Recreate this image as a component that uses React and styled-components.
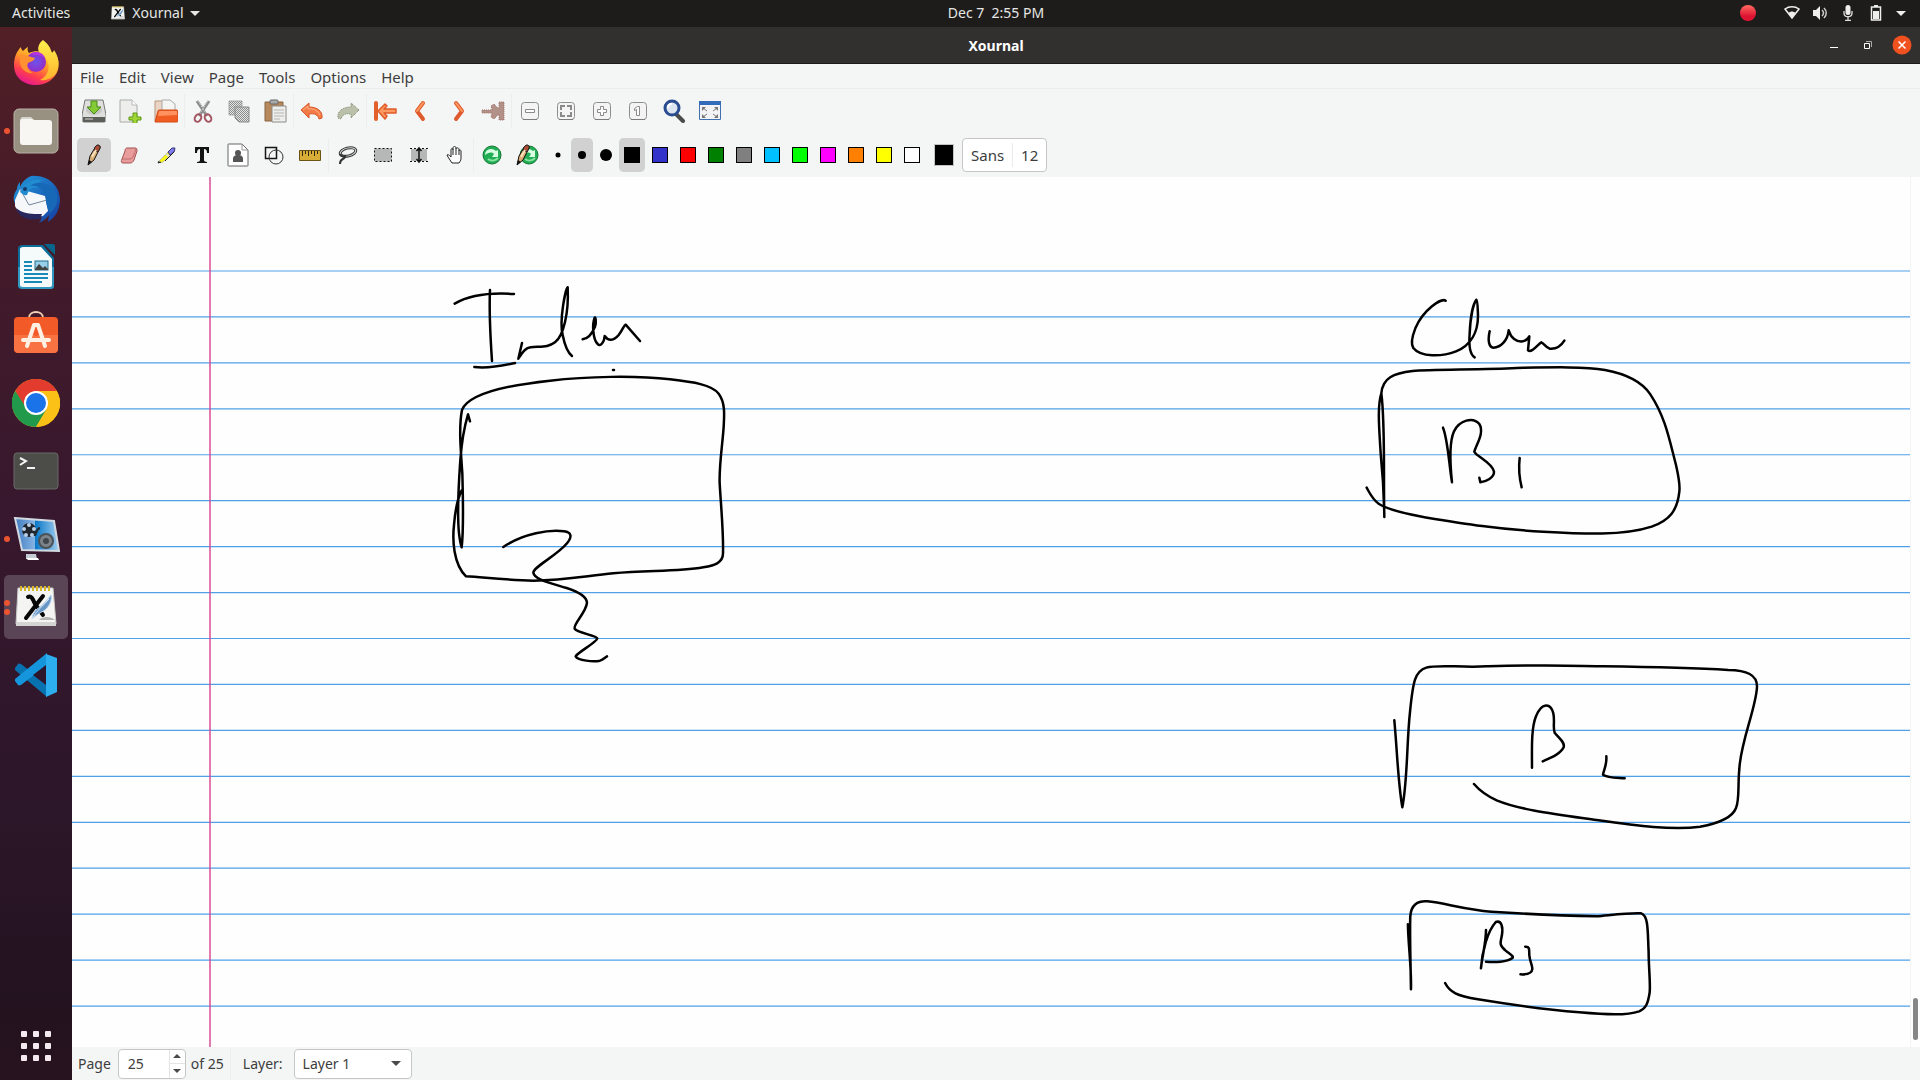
import React from "react";
import styled, { createGlobalStyle, css } from "styled-components";

const Global = createGlobalStyle`
  *, *::before, *::after { box-sizing: border-box; }
  body { margin: 0; font-family: "Noto Sans", "Open Sans", sans-serif; font-size: 14px; line-height: 20px; color: #3d3d3d; background: #f4f5f5; }
  button, input, select { font: inherit; color: inherit; margin: 0; padding: 0; border: 0; background: none; }
  svg { display: block; flex: none; }
`;

const Desktop = styled.div`
  display: flex;
  flex-direction: column;
  height: 100vh;
`;
const TopBar = styled.header`
  display: grid;
  grid-template-columns: 72px 1fr auto 1fr;
  align-items: center;
  flex: none;
  height: 27px;
  padding-bottom: 1px;
  background: #1d1c1a;
  color: #e6e6e4;
`;
const TopLeft = styled.div`
  grid-column: 1 / 3;
  display: flex;
  align-items: center;
  gap: 40px;
  padding-left: 12px;
`;
const PanelButton = styled.button`
  display: flex;
  align-items: center;
  gap: 6px;
`;
const Clock = styled.button`
  white-space: pre;
`;
const Tray = styled.div`
  display: flex;
  justify-content: flex-end;
  align-items: center;
  gap: 12px;
  padding-right: 14px;
`;
const RecordButton = styled.button`
  width: 16px;
  height: 16px;
  margin-right: 16px;
  border-radius: 50%;
  background: linear-gradient(#ff6a60, #dc1432 70%);
`;
const Body = styled.div`
  display: flex;
  flex: 1;
  min-height: 0;
`;
const Dock = styled.nav`
  display: flex;
  flex-direction: column;
  align-items: center;
  gap: 4px;
  flex: none;
  width: 72px;
  padding: 4px 0 2px;
  background: linear-gradient(#521f26 0%, #451b29 18%, #38182e 45%, #2c1629 75%, #23121f 92%, #27131f 100%);
`;
const DockButton = styled.button`
  display: flex;
  align-items: center;
  justify-content: center;
  position: relative;
  width: 64px;
  height: 64px;
  border-radius: 5px;
  background: ${(p) => (p.$active ? "#5a4556" : "transparent")};
  margin-top: ${(p) => (p.$last ? "auto" : 0)};
`;
const RunningDots = styled.span`
  position: absolute;
  left: 0;
  display: grid;
  gap: 3px;
`;
const Dot = styled.span`
  width: 6px;
  height: 6px;
  border-radius: 50%;
  background: #ec5330;
`;
const Window = styled.main`
  display: flex;
  flex-direction: column;
  flex: 1;
  min-width: 0;
`;
const TitleBar = styled.div`
  display: grid;
  grid-template-columns: 1fr auto 1fr;
  align-items: center;
  height: 37px;
  flex: none;
  padding: 0 8px;
  background: #32302f;
  border-bottom: 1px solid #1c1b1a;
  color: #fff;
`;
const Title = styled.h1`
  grid-column: 2;
  margin: 0;
  padding-top: 2px;
  font-size: 14px;
  font-weight: 700;
`;
const Controls = styled.div`
  display: flex;
  justify-content: flex-end;
  gap: 14px;
`;
const ControlButton = styled.button`
  width: 20px;
  height: 20px;
`;
const MenuBar = styled.nav`
  display: flex;
  align-items: center;
  gap: 15px;
  flex: none;
  height: 25px;
  padding: 2px 8px 0;
  border-bottom: 1px solid #ebecec;
  font-size: 15px;
`;
const MenuItem = styled.button`
  white-space: nowrap;
`;
const Toolbar = styled.div`
  display: flex;
  align-items: center;
  flex: none;
  height: 44px;
  padding-left: 4px;
`;
const ToolButton = styled.button`
  display: flex;
  align-items: center;
  justify-content: center;
  width: ${(p) => p.$width || 36}px;
  height: 34px;
  border: solid transparent;
  border-width: 0 1px;
  border-radius: 5px;
  background-clip: padding-box;
  background-color: ${(p) => (p.$active ? "#d1d1d1" : "transparent")};
`;
const Separator = styled.span`
  width: 1px;
  height: 34px;
  background: #eceded;
`;
const Swatch = styled.span`
  width: 16px;
  height: 16px;
  border: 1px solid #000;
  background: ${(p) => p.$color};
`;
const ColorButton = styled.button`
  width: 20px;
  height: 22px;
  margin: 0 8px;
  border: 1px solid #c4c4c4;
  background: #000;
`;
const controlFrame = css`
  border: 1px solid #c6c6c6;
  border-radius: 4px;
  background: #fff;
`;
const FontButton = styled.button`
  ${controlFrame}
  display: flex;
  align-items: center;
  height: 34px;
  font-size: 15px;
`;
const FontPart = styled.span`
  padding: 2px 8px;
  &:first-child { border-right: 1px solid #ebebeb; }
`;
const Sheet = styled.section`
  display: flex;
  flex: 1;
  min-height: 0;
  background: #fefefe;
`;
const Paper = styled.svg`
  flex: 1;
  min-width: 0;
  height: 100%;
`;
const ScrollTrack = styled.div`
  display: flex;
  flex-direction: column;
  justify-content: flex-end;
  align-items: center;
  width: 10px;
  padding-bottom: 7px;
  border-left: 1px solid #f4f4f4;
`;
const ScrollThumb = styled.div`
  width: 5px;
  height: 42px;
  border-radius: 3px;
  background: #868686;
`;
const StatusBar = styled.footer`
  display: flex;
  align-items: center;
  flex: none;
  height: 33px;
  padding-left: 6px;
`;
const StatusLabel = styled.label`
  padding-right: ${(p) => p.$gap || 0}px;
`;
const Spin = styled.div`
  ${controlFrame}
  display: flex;
  width: 68px;
  height: 30px;
  margin-right: 5px;
`;
const SpinInput = styled.input`
  width: 50px;
  padding-left: 9px;
  outline: none;
`;
const SpinArrows = styled.div`
  display: grid;
  flex: 1;
  border-left: 1px solid #e4e4e4;
`;
const SpinButton = styled.button`
  display: flex;
  align-items: center;
  justify-content: center;
  &:first-child { border-bottom: 1px solid #e4e4e4; }
`;
const StatusGap = styled.span`
  width: 1px;
  height: 32px;
  margin: 0 12px 0 6px;
  background: #eceded;
`;
const LayerBox = styled.div`
  ${controlFrame}
  display: grid;
  align-items: center;
  width: 118px;
  height: 30px;
  & > * { grid-area: 1 / 1; }
  & > svg { justify-self: end; margin-right: 10px; pointer-events: none; }
`;
const LayerSelect = styled.select`
  appearance: none;
  width: 100%;
  height: 28px;
  padding-left: 8px;
  outline: none;
`;

const Triangle = ({ up, fill = "#4a4a4a", w = 10 }) => (
  <svg width={w} height={w / 2} viewBox="0 0 10 5"><path d={up ? "M0 5L5 0l5 5z" : "M0 0h10L5 5z"} fill={fill} /></svg>
);

const Icon = ({ s = 24, children }) => (
  <svg width={s} height={s} viewBox={`0 0 ${s} ${s}`} fill="none">{children}</svg>
);

/* ---- dock icons, drawn on a 48px grid ---- */
const Firefox = () => (
  <Icon s={48}>
    <defs>
      <linearGradient id="fx1" x1="0.8" y1="0.1" x2="0.3" y2="1"><stop offset="0" stopColor="#ffe23e" /><stop offset=".4" stopColor="#ff9a28" /><stop offset=".72" stopColor="#ff3f4d" /><stop offset="1" stopColor="#e51694" /></linearGradient>
      <linearGradient id="fx2" x1="0" y1="0" x2="0" y2="1"><stop offset="0" stopColor="#fff04d" /><stop offset="1" stopColor="#ffb22d" /></linearGradient>
      <radialGradient id="fx3"><stop offset="0" stopColor="#6a55ea" /><stop offset="1" stopColor="#952dc8" /></radialGradient>
    </defs>
    <path d="M2 26C2 18 5 12 9 8c0 2 1 3 2 4 2-2 3-3 5-4-1 3 0 5 1 6 4-2 9-2 12-1 8-2 13 0 16 5 2 4 2 8 1 13C43 40 34 46 24 46 11 46 2 38 2 26z" fill="url(#fx1)" />
    <path d="M31 1c6 5 7 7 9 13 1-1 2-2 2-3 5 7 6 15 2 23-4 6-11 8-16 7 7-4 10-10 8-17-1-5-6-9-9-11-2-4 0-9 4-12z" fill="url(#fx2)" />
    <circle cx="24" cy="23" r="10" fill="url(#fx3)" />
    <path d="M8 16c6-1 8 2 15 3-1 3-5 4-7 5-2 4 1 8 5 10-7 1-12-4-13-10z" fill="#ff9130" />
    <path d="M18 15c5-4 13-2 15 4-4-3-6-3-9-3z" fill="#b833e1" />
  </Icon>
);
const Files = () => (
  <Icon s={48}>
    <rect x="2" y="2" width="44" height="44" rx="5" fill="#989080" stroke="#b9b3a6" />
    <path d="M8 14c0-2 1-4 3-4h8l4 4z" fill="#d8d4ce" />
    <path d="M11 12h9l2 1h15c2 0 3 1 3 3v19c0 2-1 3-3 3H11c-2 0-3-1-3-3V15c0-2 1-3 3-3z" fill="#f8f6f2" />
  </Icon>
);
const Thunderbird = () => (
  <Icon s={48}>
    <defs><linearGradient id="tb" x1="0" y1="0" x2="1" y2="1"><stop offset="0" stopColor="#2198dc" /><stop offset="1" stopColor="#153ca0" /></linearGradient></defs>
    <path d="M8 12C12 4 18 0 23 1c12 0 24 8 25 23 0 11-5 19-12 23l1-7c-3 4-6 6-10 8 3-4 3-7 2-9-12 4-24-2-27-13-1-5 1-9 3-12 0-2 1-5 3-7z" fill="url(#tb)" />
    <path d="M3 25l5-11 25 7 3 15-5 5C20 43 7 41 3 31z" fill="#f5f7fa" />
    <path d="M8 14l9 16 18-5" stroke="#77879b" />
    <path d="M4 33c8 7 19 6 26 6l-2 5C16 46 7 43 4 33z" fill="#28275e" />
    <path d="M8 17c5-11 14-14 23-12-4 1-6 4-5 8-6-2-9 1-11 7-3 1-4-1-7-3z" fill="#228cd0" />
    <path d="M18 11c8-1 14 3 16 12 0 8 2 11 4 15 4-3 9-10 7-18C41 9 27 4 18 11z" fill="#1769b8" />
    <circle cx="13" cy="14" r="2" fill="#173c6b" />
  </Icon>
);
const Writer = () => (
  <Icon s={48}>
    <path d="M11 2h20l11 13v27c0 3-1 4-4 4H11c-3 0-5-1-5-4V6c0-3 2-4 5-4z" fill="#0c6d98" />
    <path d="M6 24h36v18c0 3-1 4-4 4H11c-3 0-5-1-5-4z" fill="#3198c2" />
    <path d="M11 4h18l11 12v26c0 1-1 2-2 2H11c-2 0-3-1-3-2V6c0-1 1-2 3-2z" fill="#f5fafb" />
    <path d="M32 1h9c1 0 2 1 2 2v9z" fill="#08658c" />
    <path d="M12 19h8M12 23h8M12 27h8M12 31h24M12 35h24M12 39h18" stroke="#168bb8" strokeWidth="2" />
    <rect x="23" y="18" width="13" height="9" fill="#97cee8" stroke="#22708d" />
    <path d="M23 26l4-5 4 4 2-2 3 3v1H23z" fill="#424240" />
  </Icon>
);
const Store = () => (
  <Icon s={48}>
    <g transform="translate(0 -5)">
      <path d="M17 12C17 4 31 4 31 12" stroke="#f3cfb8" strokeWidth="2" />
      <rect x="2" y="11" width="44" height="36" rx="4" fill="#f25a28" />
      <path d="M2 29h44v14c0 2-2 4-4 4H6c-2 0-4-2-4-4z" fill="#f87242" />
      <path d="M15 40l7-21h4l7 21M11 34h26" stroke="#fff0e4" strokeWidth="4" strokeLinejoin="round" strokeLinecap="round" />
      <path d="M24 23v7" stroke="#f25a28" strokeWidth="2" />
    </g>
  </Icon>
);
const Chrome = () => (
  <Icon s={48}>
    <circle cx="24" cy="24" r="24" fill="#fbc116" />
    <path d="M3.200 12A24 24 0 0 1 44.800 12H24L13 30z" fill="#e33b2e" />
    <path d="M3.200 12A24 24 0 0 0 24 48l11-18-20 0z" fill="#229a4c" />
    <path d="M24 12h20.800A24 24 0 0 1 24 48l10-17z" fill="#fbc116" />
    <circle cx="24" cy="24" r="12" fill="#fff" />
    <circle cx="24" cy="24" r="10" fill="#1a73e8" />
  </Icon>
);
const Terminal = () => (
  <Icon s={48}>
    <rect x="2" y="6" width="44" height="36" rx="3" fill="#4c4c49" stroke="#686866" />
    <path d="M8 11l6 3-6 4M15 21h8" stroke="#f4f4f4" strokeWidth="2" />
  </Icon>
);
const Recorder = () => (
  <Icon s={48}>
    <defs><linearGradient id="rec"><stop offset="0" stopColor="#407bc0" /><stop offset=".45" stopColor="#85b4e3" /><stop offset=".46" stopColor="#0878c8" /><stop offset="1" stopColor="#a4cef0" /></linearGradient></defs>
    <path d="M3 3l39 3 5 30-37-1z" fill="url(#rec)" stroke="#d2d8df" strokeWidth="2" />
    <circle cx="17" cy="15" r="7" fill="#20252d" />
    {[[17, 10], [22, 14], [20, 20], [14, 20], [12, 14]].map(([x, y]) => <circle key={x} cx={x} cy={y} r="2" fill="#b9cfe6" />)}
    <path d="M22 20c3 1 1-6 6-7" stroke="#23282e" strokeWidth="2" />
    <circle cx="34" cy="26" r="7" fill="#7d8489" stroke="#4b5258" strokeWidth="2" />
    <circle cx="34" cy="26" r="3" fill="#41474c" />
    <path d="M14 39h10l1 5H14z" fill="#c4cbd2" /><path d="M14 43h12l1 2H16z" fill="#fff" />
  </Icon>
);
const XournalIcon = ({ size = 48 }) => (
  <svg width={size} height={size} viewBox="0 0 48 48" fill="none">
    <path d="M6 5h35l3 36H4z" fill="#f4f4f2" stroke="#c9c9c5" />
    <path d="M4 39h40v4H4z" fill="#d4d5d2" />
    <path d="M27 37c3-4 12-4 16 0z" fill="#b5b5b3" />
    {[9, 13, 17, 21, 25, 29, 33, 37].map((x) => <path key={x} d={`M${x} 3v5`} stroke="#d6b72a" strokeWidth="2" />)}
    <path d="M16 14c3-2 5 2 7 7l8 11M31 13L14 35" stroke="#070707" strokeWidth="4" strokeLinecap="round" />
    <path d="M20 36c1-6 3-9 8-12 5-4 8-8 11-12 1 5-1 10-5 14-3 3-8 4-14 10z" fill="#6796c4" stroke="#b9d3eb" />
    <path d="M20 36c4-8 11-13 17-20" stroke="#d8e9f6" />
  </svg>
);
const Code = () => (
  <Icon s={48}>
    <path d="M3 17l3-4c1-1 2 0 3 0l26 20v13L3 19z" fill="#0871b0" />
    <path d="M3 30l3 4c1 1 2 0 3 0l26-20V2L3 28z" fill="#1595dc" />
    <path d="M34 3l11 4v34l-11 5z" fill="#2caeef" /><path d="M34 14v20L21 24z" fill="#2d162b" />
  </Icon>
);
const AppsGrid = () => (
  <Icon s={30}>{[0, 12, 24].map((y) => [0, 12, 24].map((x) => <rect key={x + "-" + y} x={x} y={y} width="6" height="6" rx="1" fill="#f4eaf0" />))}</Icon>
);

/* ---- toolbar icons ---- */
const Save = () => <Icon><path d="M3 1h18l3 15v5c0 1-1 2-2 2H2c-1 0-2-1-2-2v-5z" fill="#dedfdd" stroke="#777976" /><path d="M1 18h22v4c0 1 0 1-1 1H2c-1 0-1 0-1-1z" fill="#5c5e5a" /><path d="M3 20h8" stroke="#d5d5d5" /><ellipse cx="12" cy="11" rx="8" ry="5" fill="#c7c8c6" /><path d="M9 2h6v6h4l-7 7-7-7h4z" fill="#84ca35" stroke="#48891a" /></Icon>;
const NewDoc = () => <Icon><path d="M2 1h12l5 5v17H2z" fill="#eeeeed" stroke="#aaaaa8" /><path d="M14 1v5h5" fill="#fff" stroke="#b9b9b7" /><path d="M15 14h4v4h4v3h-4v4h-4v-4h-4v-3h4z" fill="#a2d636" stroke="#5a9911" /></Icon>;
const Open = () => <Icon><path d="M1 2h8l3 2v18H1z" fill="#ead4c4" stroke="#b7977f" /><path d="M8 1h8l5 4v10H8z" fill="#f5f5f3" stroke="#aaa" /><path d="M1 23L4 12c0-1 1-1 2-1h17c1 0 1 1 1 1v10c0 1-1 1-2 1z" fill="#f15c23" stroke="#d24a18" /><path d="M5 12h18v4L4 17z" fill="#ff925e" /></Icon>;
const Cut = () => <Icon><path d="M6 2l10 15M18 2L8 17" stroke="#8a8b8a" strokeWidth="3" /><path d="M7 2l9 14M17 2L8 16" stroke="#e2e2e2" strokeDasharray="1 1" /><ellipse cx="7" cy="19" rx="3" ry="4" stroke="#a45461" strokeWidth="2" transform="rotate(30 7 19)" /><ellipse cx="17" cy="19" rx="3" ry="4" stroke="#a45461" strokeWidth="2" transform="rotate(-30 17 19)" /></Icon>;
const Copy = () => <Icon><defs><pattern id="chk" width="2" height="2" patternUnits="userSpaceOnUse"><rect width="2" height="2" fill="#e4e5e5" /><path d="M0 0h1v1H0zM1 1h1v1H1z" fill="#8c8c8c" /></pattern></defs><path d="M2 2h13v14H2z" fill="url(#chk)" stroke="#999" strokeWidth=".8" /><path d="M8 8h14v15H12l-4-4z" fill="url(#chk)" stroke="#8a8a8a" /></Icon>;
const Paste = () => <Icon><path d="M2 3h18v19H2z" fill="#b6885c" stroke="#87623e" /><rect x="7" y="1" width="8" height="4" rx="1" fill="#aaa" stroke="#666" /><path d="M9 7h14v16H9z" fill="#eeeeec" stroke="#8c8c8a" /><path d="M11 11h10M11 14h10M11 17h10M11 20h6" stroke="#b5b5b3" /></Icon>;
const Undo = () => <Icon><path d="M1 11l8-7v4c8 0 14 4 13 11l-3 1c-1-4-4-6-10-5v4z" fill="#f37b48" stroke="#d95424" strokeLinejoin="round" /><path d="M3 11l5-4v3c6-1 10 2 12 6" stroke="#ffb184" /></Icon>;
const Redo = () => <Icon><path d="M23 11l-8-7v4C7 8 1 12 2 19l3 1c1-4 4-6 10-5v4z" fill="#b9c1aa" stroke="#748262" strokeLinejoin="round" strokeDasharray="1 1" /></Icon>;
const First = () => <Icon><path d="M3 4v16" stroke="#e35f2c" strokeWidth="4" strokeLinecap="round" /><path d="M5 12l7-7 2 2-3 3h12v4H11l3 3-2 3z" fill="#ff9a63" stroke="#df5b29" strokeWidth="1.500" strokeLinejoin="round" /></Icon>;
const Prev = () => <Icon><path d="M14 4l-6 8 6 8" stroke="#df5b2d" strokeWidth="4" strokeLinecap="round" strokeLinejoin="round" /><path d="M14 4l-6 8" stroke="#ff995f" strokeWidth="2" strokeLinecap="round" /></Icon>;
const Next = () => <Icon><path d="M11 4l6 8-6 8" stroke="#df5b2d" strokeWidth="4" strokeLinecap="round" strokeLinejoin="round" /><path d="M11 4l6 8" stroke="#ff995f" strokeWidth="2" strokeLinecap="round" /></Icon>;
const Last = () => <Icon><path d="M1 11h10l-1-4 3-2 5 5V3h5v18h-5v-6l-5 5-3-2 1-4H1z" fill="#b29188" stroke="#9b6c60" strokeDasharray="1 1" /></Icon>;
const KeyIcon = ({ children }) => <Icon><rect x="3.500" y="3.500" width="17" height="17" rx="3" fill="#f4f4f4" stroke="#8d8e8e" /><path d="M5 20.500h14" stroke="#7c7c7c" />{children}</Icon>;
const ZoomOut = () => <KeyIcon><path d="M7.500 10.500h9v3h-9z" fill="#fff" stroke="#8a8a8a" /></KeyIcon>;
const ZoomFit = () => <KeyIcon><path d="M7 11V7h4M13 7h4v4M17 13v4h-4M11 17H7v-4" stroke="#8a8a8a" strokeWidth="2" /></KeyIcon>;
const ZoomIn = () => <KeyIcon><path d="M10.500 7.500h3v3h3v3h-3v3h-3v-3h-3v-3h3z" fill="#fff" stroke="#8a8a8a" /></KeyIcon>;
const ZoomOne = () => <KeyIcon><path d="M8.500 9.500l3-2h2v9h-3v-6l-2 1z" fill="#fff" stroke="#8a8a8a" /></KeyIcon>;
const Magnify = () => <Icon><path d="M14 15l7 7" stroke="#4b4b49" strokeWidth="4" strokeLinecap="round" /><circle cx="10" cy="9" r="7" fill="#dce6f1" stroke="#294b90" strokeWidth="3" /><path d="M6 9c0-3 2-4 4-4" stroke="#fff" strokeWidth="2" /></Icon>;
const Fullscreen = () => <Icon><path d="M1.500 2.500h21v18h-21z" fill="#f3f3f5" stroke="#4170b2" /><path d="M1 2h22v4H1z" fill="#326bb9" /><path d="M4 12V8h4zM16 8h4v4zM20 15v4h-4zM8 19H4v-4z" fill="#777" /><path d="M5 9l4 3M19 9l-4 3M5 18l4-3M19 18l-4-3" stroke="#777" /></Icon>;

const pencilShape = <><path d="M6 22l2-9 6-10c2-2 5 0 4 2l-6 12z" fill="#d8ad75" stroke="#111" strokeLinejoin="round" /><path d="M13 4c2-3 6-2 5 1l-2 4-4-2z" fill="#ae4e37" stroke="#252525" /><path d="M10 14l4-7" stroke="#fbe1ba" strokeWidth="2" /><path d="M6 22l1-5 3 2z" fill="#111" /></>;
const Pencil = () => <Icon>{pencilShape}</Icon>;
const Eraser = () => <Icon><path d="M9 5h8c2 0 2 1 2 3l-3 9c-1 2-2 3-4 3H5c-2 0-2-2-1-4l3-8c0-2 1-3 2-3z" fill="#e99c9c" stroke="#a45353" /><path d="M4 16h8c3 0 4-5 6-10" stroke="#bc6d6d" /></Icon>;
const Marker = () => <Icon><path d="M6 20l-1-2L17 6l3-1 1 3-12 11z" fill="#f7f718" stroke="#aaa" strokeWidth=".7" /><path d="M14 9l4-4h3l-1 4-4 3z" fill="#837ced" stroke="#36357c" /><path d="M12 11l4 3" stroke="#ddd" strokeWidth="2" /><path d="M5 18l-1 2 3-1M11 18l9-9" stroke="#222" /></Icon>;
const TextTool = () => <Icon><path d="M5 4h14v6h-2c0-3-1-4-3-4v11c0 1 1 2 3 2v1H7v-1c2 0 3-1 3-2V6C8 6 7 7 7 10H5z" fill="#131313" /></Icon>;
const ImageTool = () => <Icon><path d="M3 1h13l6 6v15c0 1 0 1-1 1H3c-1 0-1 0-1-1V2c0-1 0-1 1-1z" fill="#fff" stroke="#666" /><path d="M16 1v6h6" stroke="#999" /><circle cx="12" cy="10" r="3" fill="#555" /><path d="M7 19v-3c0-3 2-4 5-4s5 1 5 4v3z" fill="#555" /></Icon>;
const Shapes = () => <Icon><path d="M3.500 4.500h11v11h-11z" stroke="#151515" strokeWidth="1.500" /><circle cx="14" cy="14" r="7" stroke="#333" /></Icon>;
const Ruler = () => <Icon><path d="M1.500 7.500h21v10h-21z" fill="#d8ad37" stroke="#6a5317" /><path d="M4.500 8v5M7.500 8v3M10.500 8v5M13.500 8v3M16.500 8v5M19.500 8v3" stroke="#302810" /></Icon>;
const Lasso = () => <Icon><ellipse cx="13" cy="9" rx="8" ry="4" transform="rotate(-14 13 9)" stroke="#363636" strokeWidth="3" /><ellipse cx="13" cy="9" rx="8" ry="4" transform="rotate(-14 13 9)" stroke="#ddd" /><path d="M5 11c2 5 7 0 5 3-1 3-5 1-5 7" stroke="#333" strokeWidth="2" /></Icon>;
const SelectRect = () => <Icon><path d="M3.500 5.500h17v13h-17z" fill="#b6b8b8" stroke="#111" strokeDasharray="2 2" /></Icon>;
const VSpace = () => <Icon><path d="M4 6h16v12H4z" fill="#b6b8b8" /><path d="M3 5.500h6M15 5.500h6M3 18.500h6M15 18.500h6" stroke="#111" strokeDasharray="2 2" /><path d="M12 5v14M9.500 8L12 5l2.500 3M9.500 16l2.500 3 2.500-3" stroke="#111" strokeWidth="1.500" /></Icon>;
const Hand = () => <Icon><path d="M9 20l-4-6-1-2c1-1 2 0 4 2V7c0-2 2-2 2 0V5c0-2 3-2 3 0v1c0-2 3-1 3 0v2c0-2 2-1 2 0v7c0 3-1 3-2 5z" fill="#fff" stroke="#222" /><path d="M10 7v5M13 6v6M16 8v4" stroke="#222" /></Icon>;
const swirl = <><circle cx="12" cy="12" r="9" fill="#21ad54" stroke="#137735" /><path d="M5 12c0-6 7-8 11-4l2-1v7h-6l2-3c-3-3-6-1-9 1z" fill="#d8ffe1" /><path d="M8 16c4 3 8 1 10-1" stroke="#86e29e" strokeWidth="2" /></>;
const Refresh = () => <Icon>{swirl}</Icon>;
const RefreshPen = () => <Icon s={26}><g transform="translate(2 1)">{swirl}</g><g transform="translate(-4 1)">{pencilShape}</g></Icon>;
const PenDot = ({ r }) => <Icon s={16}><circle cx="8" cy="8" r={r} fill="#000" /></Icon>;

const dockApps = [
  ["Firefox", Firefox, 0], ["Files", Files, 1], ["Thunderbird", Thunderbird, 0], ["Writer", Writer, 0], ["Software", Store, 0],
  ["Chrome", Chrome, 0], ["Terminal", Terminal, 0], ["Recorder", Recorder, 1], ["Xournal", XournalIcon, 2], ["Code", Code, 0],
];
const fileTools = [
  [["Save", Save], ["New", NewDoc], ["Open", Open]],
  [["Cut", Cut], ["Copy", Copy], ["Paste", Paste]],
  [["Undo", Undo], ["Redo", Redo]],
  [["First page", First], ["Previous page", Prev], ["Next page", Next], ["Last page", Last]],
  [["Zoom out", ZoomOut], ["Page width", ZoomFit], ["Zoom in", ZoomIn], ["Normal size", ZoomOne], ["Set zoom", Magnify], ["Fullscreen", Fullscreen]],
];
const penTools = [
  [["Pencil", Pencil], ["Eraser", Eraser], ["Highlighter", Marker], ["Text", TextTool], ["Image", ImageTool], ["Shape recognizer", Shapes], ["Ruler", Ruler]],
  [["Select region", Lasso], ["Select rectangle", SelectRect], ["Vertical space", VSpace], ["Hand", Hand]],
  [["Default", Refresh], ["Default pen", RefreshPen]],
];
const colors = ["#000000", "#3333cc", "#ff0000", "#008000", "#808080", "#00c0ff", "#00ff00", "#ff00ff", "#ff8000", "#ffff00", "#ffffff"];

const ToolGroups = ({ groups, active }) =>
  groups.map((group, i) => (
    <React.Fragment key={i}>
      {i > 0 && <Separator />}
      {group.map(([name, Glyph]) => (
        <ToolButton key={name} aria-label={name} $active={name === active}><Glyph /></ToolButton>
      ))}
    </React.Fragment>
  ));

/* Pen strokes, grouped by sketch; each group has its own origin and scale on the page. */
const sketches = [
  { x: 358, y: 93, kx: 3, strokes: [
    "M74 101C110 80 165 66 252 72", "M180 60C177 125 181 200 186 273", "M133 291C170 296 215 288 255 279",
    "M276 219L265 266C282 240 288 234 302 232C335 229 355 232 375 217C400 198 417 130 413 52C407 55 387 150 398 195C404 225 411 246 426 258",
    "M458 208C475 205 488 187 495 170C500 155 496 139 494 143C485 165 490 210 503 222C511 232 523 216 524 198C535 214 551 213 566 195C577 181 580 168 587 164L630 213",
    "M549 300h3",
    "M120 454L114 433C103 470 95 515 91 570C87 630 80 720 87 790C90 815 94 829 95 832C101 780 99 680 97 610C92 540 86 470 96 420C114 375 220 347 360 332C470 319 620 316 720 328C790 336 845 344 866 371C886 397 883 435 881 470C878 520 867 585 869 640C873 710 881 790 879 850C879 878 855 886 820 892C740 906 650 900 550 910C460 919 400 930 310 932C240 930 180 924 108 919C70 882 67 810 72 765C76 715 83 685 95 661",
    "M220 831C280 790 360 778 402 784C425 787 427 800 411 820C380 858 310 890 310 908C312 929 365 940 410 954C450 967 470 980 471 998C469 1027 429 1062 434 1076C440 1088 499 1097 502 1105C500 1117 440 1149 437 1159C444 1172 490 1176 510 1172C520 1169 524 1163 531 1159",
  ] },
  { x: 1278, y: 103, kx: 3, strokes: [
    "M287 62C275 53 220 88 196 145C185 173 181 191 190 204C212 232 275 231 318 214C364 195 384 154 384 107C383 80 383 61 379 59C369 72 361 115 359 160C356 198 361 224 374 232",
    "M419 154C412 184 418 202 430 203C453 202 473 181 476 151C482 173 500 187 518 184C532 180 536 173 538 169L534 211C545 220 563 194 574 187C582 190 586 201 599 206C621 208 635 195 643 182",
    "M103 711C100 600 106 430 94 340C81 380 88 450 92 520C99 590 102 650 103 711M94 340C98 294 130 280 188 273C240 267 390 270 500 264C600 262 700 259 765 270C830 282 875 304 901 343C947 413 958 479 978 555C986 593 991 612 988 635C982 691 960 720 905 740C820 768 700 762 580 755C450 749 330 729 220 711C155 699 110 687 86 671C68 659 59 639 50 623",
    "M279 443C294 480 297 555 306 607C301 560 296 490 312 454C328 421 369 409 388 432C404 458 379 493 373 515C380 530 428 549 432 575C433 593 408 605 391 607L388 593",
    "M509 534C505 568 509 598 515 622",
  ] },
  { x: 1308, y: 473, kx: 3, strokes: [
    "M43 211C52 310 54 397 67 472C83 390 80 275 90 186C99 93 105 64 139 53C169 43 240 53 320 49C430 46 500 44 610 48C740 50 900 51 1045 60C1100 61 1132 74 1131 111C1128 175 1082 275 1078 357C1073 405 1079 450 1068 474C1056 506 1010 521 960 530C880 542 770 527 650 510C530 493 420 480 350 451C315 435 299 422 282 402",
    "M456 353C456 300 453 235 468 199C485 156 512 158 520 190C525 212 518 234 524 248C540 268 555 277 551 292C542 311 515 322 488 334",
    "M679 319C681 345 672 356 669 374C683 384 711 383 734 385",
  ] },
  { x: 1318, y: 703, kx: 2.958, strokes: [
    "M62 328C64 262 54 198 53 133C61 190 61 259 62 328C61 250 58 164 60 110C62 74 82 62 110 64C160 68 220 89 300 95C390 101 500 107 610 109C665 104 710 98 743 100C765 107 762 155 765 215C765 260 771 315 768 338C763 373 755 387 737 394C700 407 640 404 560 397C450 388 350 373 260 358C198 347 177 337 163 309",
    "M284 150C284 188 273 227 269 265C273 213 288 154 313 126C330 120 335 142 331 166C326 190 323 194 340 210C347 218 371 229 361 235C347 246 310 248 284 245",
    "M400 200C412 199 412 205 412 225C414 247 421 254 421 267C420 278 407 284 386 283",
  ] },
];
const rules = Array.from({ length: 17 }, (_, i) => 94 + i * 45.94);

export default function App() {
  return (
    <Desktop>
      <Global />
      <TopBar>
        <TopLeft>
          <PanelButton>Activities</PanelButton>
          <PanelButton><XournalIcon size={16} />Xournal<Triangle fill="#e6e6e4" /></PanelButton>
        </TopLeft>
        <Clock>{"Dec 7  2:55 PM"}</Clock>
        <Tray>
          <RecordButton aria-label="Recording" />
          <Icon s={16}><path d="M1 4C5 1 11 1 15 4L8 13z" stroke="#eee" strokeWidth="1.500" /><path d="M4.500 8c2-2 5-2 7 0L8 13z" fill="#eee" /></Icon>
          <Icon s={16}><path d="M1 5h3l4-4v14l-4-4H1z" fill="#eee" /><path d="M10 5c2 2 2 4 0 6M12 3c3 3 3 7 0 10" stroke="#ccc" strokeWidth="1.500" /></Icon>
          <Icon s={16}><rect x="5.500" y="0" width="5" height="10" rx="2.500" fill="#eee" /><path d="M4 6v2c0 5 8 5 8 0V6M8 12v3M5 15.300h6" stroke="#ddd" strokeWidth="1.300" /></Icon>
          <Icon s={16}><path d="M3.500 2h9v13h-9z" stroke="#eee" strokeWidth="1.500" /><path d="M5 6h6v8H5zM6 0h4v2H6z" fill="#eee" /></Icon>
          <Triangle fill="#eee" />
        </Tray>
      </TopBar>
      <Body>
        <Dock>
          {dockApps.map(([name, Glyph, dots]) => (
            <DockButton key={name} aria-label={name} $active={dots === 2}>
              {dots > 0 && <RunningDots>{Array.from({ length: dots }, (_, i) => <Dot key={i} />)}</RunningDots>}
              <Glyph />
            </DockButton>
          ))}
          <DockButton aria-label="Show applications" $last><AppsGrid /></DockButton>
        </Dock>
        <Window>
          <TitleBar>
            <Title>Xournal</Title>
            <Controls>
              <ControlButton aria-label="Minimize"><Icon s={20}><path d="M6 12.500h8" stroke="#fff" /></Icon></ControlButton>
              <ControlButton aria-label="Restore"><Icon s={20}><path d="M6.500 8.500h5v5h-5z" stroke="#fff" /><path d="M8 6.500h5.500V12" stroke="#aaa" /></Icon></ControlButton>
              <ControlButton aria-label="Close"><Icon s={20}><circle cx="10" cy="10" r="9.500" fill="#f1501f" /><path d="M6.500 6.500l7 7M13.500 6.500l-7 7" stroke="#fff" strokeWidth="1.500" /></Icon></ControlButton>
            </Controls>
          </TitleBar>
          <MenuBar>
            {["File", "Edit", "View", "Page", "Tools", "Options", "Help"].map((m) => <MenuItem key={m}>{m}</MenuItem>)}
          </MenuBar>
          <Toolbar><ToolGroups groups={fileTools} /></Toolbar>
          <Toolbar>
            <ToolGroups groups={penTools} active="Pencil" />
            {[2.5, 4, 6].map((r) => <ToolButton key={r} aria-label={`Pen width ${r}`} $width={24} $active={r === 4}><PenDot r={r} /></ToolButton>)}
            {colors.map((c, i) => <ToolButton key={c} aria-label={c} $width={28} $active={i === 0}><Swatch $color={c} /></ToolButton>)}
            <ColorButton aria-label="Current color" />
            <FontButton><FontPart>Sans</FontPart><FontPart>12</FontPart></FontButton>
          </Toolbar>
          <Sheet>
            <Paper>
              {rules.map((y) => <line key={y} x1="0" x2="100%" y1={y} y2={y} stroke="#4fa0e8" strokeWidth="1.200" />)}
              <line x1="138" x2="138" y1="0" y2="100%" stroke="#d8428f" strokeWidth="1.400" />
              {sketches.map((s) => (
                <g key={s.x} transform={`translate(${s.x} ${s.y}) scale(${1 / s.kx} ${1 / 3})`} fill="none" stroke="#000" strokeWidth="7.500" strokeLinecap="round" strokeLinejoin="round">
                  {s.strokes.map((d) => <path key={d} d={d} />)}
                </g>
              ))}
            </Paper>
            <ScrollTrack><ScrollThumb /></ScrollTrack>
          </Sheet>
          <StatusBar>
            <StatusLabel htmlFor="page" $gap={7}>Page</StatusLabel>
            <Spin>
              <SpinInput id="page" defaultValue="25" />
              <SpinArrows>
                <SpinButton aria-label="Next"><Triangle up w={8} /></SpinButton>
                <SpinButton aria-label="Previous"><Triangle w={8} /></SpinButton>
              </SpinArrows>
            </Spin>
            <span>of 25</span>
            <StatusGap />
            <StatusLabel htmlFor="layer" $gap={11}>Layer:</StatusLabel>
            <LayerBox>
              <LayerSelect id="layer"><option>Layer 1</option></LayerSelect>
              <Triangle />
            </LayerBox>
          </StatusBar>
        </Window>
      </Body>
    </Desktop>
  );
}
